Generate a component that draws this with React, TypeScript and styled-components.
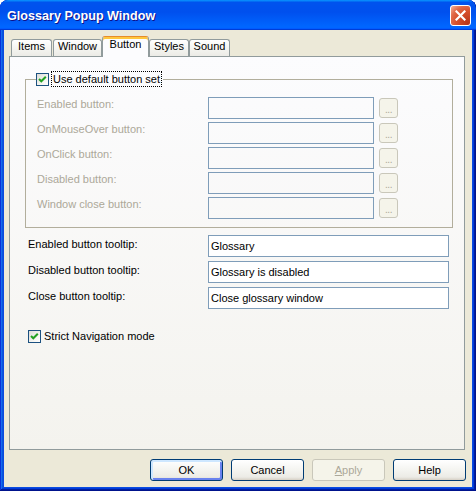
import React from "react";
import styled, { createGlobalStyle } from "styled-components";

const Global = createGlobalStyle`
  html, body { margin: 0; padding: 0; background: #ffffff; }
  body { font-family: Tahoma, "Liberation Sans", Arial, sans-serif; font-size: 11px; color: #000; }
  #root { width: 476px; height: 491px; }
`;

const Window = styled.div`
  width: 476px;
  height: 491px;
  box-sizing: border-box;
  display: flex;
  flex-direction: column;
  border-radius: 8px 8px 0 0;
  background: #0A4BE0;
  box-shadow: inset -1px -1px #00138c, inset 1px 1px #0831d9, inset -2px -2px #001ea0,
    inset 2px 2px #166aee, inset -3px -3px #003bda, inset 3px 3px #0855dd;
  overflow: hidden;
`;

const TitleBar = styled.div`
  height: 30px;
  flex: none;
  display: flex;
  align-items: center;
  justify-content: space-between;
  padding: 0 5px 0 7px;
  border-radius: 8px 8px 0 0;
  background: linear-gradient(
    to bottom,
    #0997ff 0%,
    #0053ee 8%,
    #0050ee 40%,
    #0066ff 88%,
    #0066ff 93%,
    #005bff 95%,
    #003dd7 96%,
    #003dd7 100%
  );
`;

const Title = styled.span`
  font-family: "Liberation Sans", Arial, sans-serif;
  font-weight: bold;
  font-size: 12.6px;
  color: #ffffff;
  text-shadow: 1px 1px #0f1089;
  margin-top: 1px;
`;

const CloseButton = styled.div`
  width: 21px;
  height: 21px;
  box-sizing: border-box;
  border: 1px solid #ffffff;
  border-radius: 3px;
  display: flex;
  align-items: center;
  justify-content: center;
  background: radial-gradient(circle at 90% 90%, #b8361a 0%, #d7502c 50%, #e06a49 72%, #f3a88e 95%, #ffd8c8 100%);
  margin-top: 1px;
`;

const Body = styled.div`
  flex: 1;
  margin: 0 4px 4px;
  background: #ece9d8;
  padding: 6px 6px 6px 5px;
  display: flex;
  flex-direction: column;
`;

const TabStrip = styled.div`
  display: flex;
  align-items: flex-end;
  height: 20px;
  padding-left: 2px;
  position: relative;
  z-index: 1;
`;

const Tab = styled.div<{ $active?: boolean; $w: number; $gap?: number }>`
  width: ${(p) => p.$w}px;
  margin-right: ${(p) => p.$gap ?? 0}px;
  height: ${(p) => (p.$active ? 21 : 17)}px;
  margin-bottom: ${(p) => (p.$active ? -1 : 0)}px;
  box-sizing: border-box;
  border: 1px solid #919b9c;
  border-bottom: none;
  border-top-color: ${(p) => (p.$active ? "#e68b2c" : "#919b9c")};
  border-radius: 3px 3px 0 0;
  background: ${(p) =>
    p.$active ? "#fcfcfe" : "linear-gradient(to bottom, #ffffff 0%, #f3f3ef 60%, #ecebe6 100%)"};
  box-shadow: ${(p) => (p.$active ? "inset 0 2px #ffc73c" : "none")};
  text-align: center;
  line-height: 13px;
  padding-top: ${(p) => (p.$active ? 1 : 0)}px;
  font-family: "Liberation Sans", Arial, sans-serif;
  font-size: 11px;
`;

const Panel = styled.div`
  width: 456px;
  height: 394px;
  box-sizing: border-box;
  border: 1px solid #919b9c;
  background: linear-gradient(to bottom, #fcfcfe 0%, #f4f3ee 100%);
  display: flex;
  flex-direction: column;
`;

const Group = styled.fieldset`
  margin: 15px 0 0 15px;
  padding: 0;
  width: 428px;
  box-sizing: border-box;
  border: 1px solid #b2ae9c;
  min-inline-size: 0;
`;

const Legend = styled.legend`
  margin-left: 10px;
  padding: 0 2px 0 0;
  display: flex;
  align-items: center;
  height: 14px;
`;

const Check = styled.span`
  width: 13px;
  height: 13px;
  box-sizing: border-box;
  border: 1px solid #1c5180;
  background: linear-gradient(135deg, #dcdcd7 0%, #f4f4f0 60%, #ffffff 100%);
  display: inline-flex;
  align-items: center;
  justify-content: center;
  flex: none;
`;

const FocusLabel = styled.span`
  margin-left: 3px;
  padding: 0 1px;
  outline: 1px dotted #000;
  outline-offset: 0;
  line-height: 14px;
  font-family: "Liberation Sans", Arial, sans-serif;
  font-size: 11px;
`;

const GroupRows = styled.div`
  display: grid;
  grid-template-columns: 166px 166px 19px;
  column-gap: 5px;
  row-gap: 3px;
  grid-auto-rows: 22px;
  padding: 11px 0 8px 11px;
`;

const Label = styled.span<{ $disabled?: boolean; $offset: number }>`
  align-self: start;
  margin-top: ${(p) => p.$offset}px;
  line-height: 13px;
  font-family: "Liberation Sans", Arial, sans-serif;
  font-size: 11px;
  color: ${(p) => (p.$disabled ? "#aca899" : "#000")};
  white-space: nowrap;
`;

const TextBox = styled.input`
  height: 22px;
  width: 100%;
  box-sizing: border-box;
  margin: 0;
  border: 1px solid #7f9db9;
  padding: 0 2px;
  font-family: "Liberation Sans", Arial, sans-serif;
  font-size: 11px;
  color: #000;
  background: #ffffff;
  outline: none;
  &:disabled {
    background: transparent;
  }
`;

const Ellipsis = styled.div`
  width: 19px;
  height: 20px;
  margin-top: 1px;
  box-sizing: border-box;
  border: 1px solid #c9c7ba;
  border-radius: 3px;
  background: #f5f4ea;
  color: #aca899;
  font-family: "Liberation Sans", Arial, sans-serif;
  font-size: 10px;
  display: flex;
  align-items: flex-end;
  justify-content: center;
  line-height: 13px;
  padding-bottom: 1px;
  letter-spacing: -0.5px;
`;

const TipRows = styled.div`
  display: grid;
  grid-template-columns: 180px 241px;
  row-gap: 4px;
  grid-auto-rows: 22px;
  margin-top: 7px;
  padding-left: 18px;
`;

const CheckRow = styled.div`
  display: flex;
  align-items: center;
  margin: 20px 0 0 18px;
  height: 14px;
`;

const PlainLabel = styled.span`
  margin-left: 3px;
  line-height: 14px;
  font-family: "Liberation Sans", Arial, sans-serif;
  font-size: 11px;
`;

const ButtonRow = styled.div`
  display: flex;
  justify-content: flex-end;
  gap: 8px;
  margin-top: 9px;
`;

const Button = styled.div<{ $default?: boolean; $disabled?: boolean }>`
  width: 73px;
  height: 22px;
  box-sizing: border-box;
  border: 1px solid ${(p) => (p.$disabled ? "#c9c7ba" : "#003c74")};
  border-radius: 3px;
  background: ${(p) =>
    p.$disabled ? "#f5f4ea" : "linear-gradient(to bottom, #ffffff 0%, #f4f4f0 50%, #ecebe6 85%, #d6d0c5 100%)"};
  box-shadow: ${(p) =>
    p.$default ? "inset 1px 1px 0 1px #cee7ff, inset -1px -1px 0 1px #6982ee" : "none"};
  color: ${(p) => (p.$disabled ? "#aca899" : "#000")};
  display: flex;
  align-items: center;
  justify-content: center;
  font-family: "Liberation Sans", Arial, sans-serif;
  font-size: 11px;
  u {
    text-decoration: underline;
  }
`;

const CheckMark = () => (
  <svg width="11" height="11" viewBox="0 0 11 11">
    <polyline points="2,5 4.3,7.3 8.8,2.8" fill="none" stroke="#21a121" strokeWidth="2" />
  </svg>
);

const groupRows = [
  "Enabled button:",
  "OnMouseOver button:",
  "OnClick button:",
  "Disabled button:",
  "Window close button:",
];

const tipRows = [
  ["Enabled button tooltip:", "Glossary"],
  ["Disabled button tooltip:", "Glossary is disabled"],
  ["Close button tooltip:", "Close glossary window"],
];

const tabs: { label: string; w: number; gap?: number; active?: boolean }[] = [
  { label: "Items", w: 41, gap: 1 },
  { label: "Window", w: 49 },
  { label: "Button", w: 47, active: true },
  { label: "Styles", w: 40 },
  { label: "Sound", w: 41 },
];

export default function App() {
  return (
    <>
      <Global />
      <Window>
        <TitleBar>
          <Title>Glossary Popup Window</Title>
          <CloseButton>
            <svg width="11" height="11" viewBox="0 0 11 11">
              <path d="M1.5 1.5 L9.5 9.5 M9.5 1.5 L1.5 9.5" stroke="#fff" strokeWidth="2.2" strokeLinecap="square" />
            </svg>
          </CloseButton>
        </TitleBar>
        <Body>
          <TabStrip>
            {tabs.map((t) => (
              <Tab key={t.label} $w={t.w} $gap={t.gap} $active={t.active}>
                {t.label}
              </Tab>
            ))}
          </TabStrip>
          <Panel>
            <Group>
              <Legend>
                <Check>
                  <CheckMark />
                </Check>
                <FocusLabel>Use default button set</FocusLabel>
              </Legend>
              <GroupRows>
                {groupRows.map((l) => (
                  <React.Fragment key={l}>
                    <Label $disabled $offset={1}>
                      {l}
                    </Label>
                    <TextBox disabled defaultValue="" />
                    <Ellipsis>...</Ellipsis>
                  </React.Fragment>
                ))}
              </GroupRows>
            </Group>
            <TipRows>
              {tipRows.map(([l, v]) => (
                <React.Fragment key={l}>
                  <Label $offset={3}>{l}</Label>
                  <TextBox readOnly defaultValue={v} />
                </React.Fragment>
              ))}
            </TipRows>
            <CheckRow>
              <Check>
                <CheckMark />
              </Check>
              <PlainLabel>Strict Navigation mode</PlainLabel>
            </CheckRow>
          </Panel>
          <ButtonRow>
            <Button $default>OK</Button>
            <Button>Cancel</Button>
            <Button $disabled>
              <span>
                <u>A</u>pply
              </span>
            </Button>
            <Button>Help</Button>
          </ButtonRow>
        </Body>
      </Window>
    </>
  );
}
